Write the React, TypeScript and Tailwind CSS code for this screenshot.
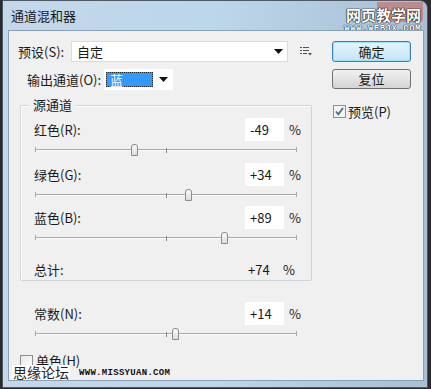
import React from "react";

const cjk = { fontFamily: '"Noto Sans CJK SC", "Noto Sans", sans-serif' };

function Slider({ value }: { value: number }) {
  const pct = (value + 200) / 400;
  return (
    <div className="relative h-[12px] w-[262px]">
      <div className="absolute left-0 right-0 top-[5px] h-[2px] border-t border-[#a9a9a9] border-b border-b-[#ffffff]" />
      <div className="absolute left-0 top-[3px] h-[5px] w-px bg-[#a9a9a9]" />
      <div className="absolute right-0 top-[3px] h-[5px] w-px bg-[#a9a9a9]" />
      <div className="absolute left-[131px] top-[4px] h-[5px] w-px bg-[#8a8a8a]" />
      <div
        className="absolute top-0 h-[12px] w-[7px] -ml-[3px] rounded-t-[3px] border border-[#8c8c8c] bg-gradient-to-b from-[#fbfbfb] to-[#dcdcdc]"
        style={{ left: `${pct * 262}px` }}
      />
    </div>
  );
}

function SourceRow({ label, value, gap, outside }: { label: string; value: string; gap: number; outside?: boolean }) {
  const num = parseInt(value, 10);
  return (
    <div style={{ marginTop: gap }}>
      <div className="flex h-[23px] items-center">
        <div className={`${outside ? "w-[227px] pl-[16px]" : "w-[224px] pl-[13px]"} text-[13px] text-[#1a1a1a]`}>{label}</div>
        <div className="flex h-[23px] w-[39px] items-center bg-white pl-[5px] text-[13px] text-[#1a1a1a]">{value}</div>
        <div className="ml-[5px] text-[13px] text-[#222]">%</div>
      </div>
      <div className={`${outside ? "ml-[17px]" : "ml-[14px]"} mt-[3px]`}>
        <Slider value={num} />
      </div>
    </div>
  );
}

function DropArrow() {
  return (
    <svg width="9" height="5" viewBox="0 0 9 5">
      <path d="M0 0h9L4.5 5z" fill="#111" />
    </svg>
  );
}

export default function App() {
  return (
    <div className="h-[389px] w-[431px] overflow-hidden bg-[#2c2a2e]" style={cjk}>
      <div className="ml-[2px] flex h-[388px] w-[426px] flex-col rounded-tr-[8px] border border-[#4d5a66] bg-gradient-to-r from-[#c4d8ea] via-[#bcd6ea] to-[#a9bfd3]">
        <div className="relative flex h-[29px] items-center pl-[8px] text-[13px] text-[#1b1b1b]">
          通道混和器
          <div className="absolute right-[4px] top-[1px] h-[20px] w-[46px] rounded-b-[4px] bg-[#c9675d] opacity-60" />
          <div className="absolute right-[6px] top-[6px] flex flex-col items-end leading-none">
            <span className="text-[15px] font-bold text-white [text-shadow:0_0_1px_#000,0_0_1px_#000,0_0_1px_#000]">网页教学网</span>
            <span className="mt-[3px] font-mono text-[9px] font-bold tracking-[0.5px] text-white [text-shadow:0_0_1px_#000,0_0_1px_#000]">
              WWW.WEBJX.COM
            </span>
          </div>
        </div>
        <div className="relative ml-[5px] h-[351px] w-[416px] border border-[#8aa0b4] bg-[#f0f0f0]">
          <div className="flex pl-[9px] pt-[10px]">
            <div className="w-[306px]">
              <div className="flex h-[21px] items-center">
                <div className="w-[53px] text-[13px] text-[#1a1a1a]">预设(S):</div>
                <div className="flex h-[21px] w-[217px] items-center justify-between border border-[#dcdcdc] bg-white pl-[5px] pr-[4px] text-[13px] text-[#1a1a1a]">
                  自定
                  <DropArrow />
                </div>
                <svg className="ml-[12px]" width="12" height="9" viewBox="0 0 12 9">
                  <path d="M0 0.5h2M0 3.5h2M0 6.5h2M3 0.5h6M3 3.5h6M3 6.5h4" stroke="#4a5560" strokeWidth="1" />
                  <path d="M8 6h4L10 8.5z" fill="#4a5560" />
                </svg>
              </div>
              <div className="mt-[7px] flex h-[21px] items-center pl-[9px]">
                <div className="w-[77px] text-[13px] text-[#1a1a1a]">输出通道(O):</div>
                <div className="flex h-[21px] w-[69px] items-center bg-white pl-[2px] pr-[5px]">
                  <div className="flex h-[15px] w-[47px] items-center border border-dotted border-[#222] bg-[#3399ff] pl-[3px] text-[13px] text-white">
                    蓝
                  </div>
                  <div className="ml-auto">
                    <DropArrow />
                  </div>
                </div>
              </div>
              <div className="relative ml-[2px] mt-[15px] h-[176px] w-[292px] rounded-[2px] border border-[#cdd5d9] shadow-[inset_1px_1px_0_#ffffff]">
                <div className="absolute -top-[9px] left-[8px] bg-[#f0f0f0] px-[4px] text-[13px] leading-[16px] text-[#1a1a1a]">
                  源通道
                </div>
                <SourceRow label="红色(R):" value="-49" gap={12} />
                <SourceRow label="绿色(G):" value="+34" gap={7} />
                <SourceRow label="蓝色(B):" value="+89" gap={5} />
                <div className="mt-[16px] flex h-[20px] items-center">
                  <div className="w-[227px] pl-[13px] text-[13px] text-[#1a1a1a]">总计:</div>
                  <div className="w-[35px] text-[13px] text-[#1a1a1a]">+74</div>
                  <div className="text-[13px] text-[#222]">%</div>
                </div>
              </div>
              <SourceRow label="常数(N):" value="+14" gap={21} outside />
              <div className="ml-[2px] mt-[14px] flex items-center">
                <div className="h-[13px] w-[13px] border border-[#8e8f8f] bg-gradient-to-br from-[#e6e6e6] to-[#ffffff]" />
                <div className="ml-[3px] text-[13px] leading-[14px] text-[#1a1a1a]">单色(H)</div>
              </div>
            </div>
            <div className="ml-[8px] flex w-[79px] flex-col">
              <div className="flex h-[21px] items-center justify-center rounded-[3px] border border-[#3c7fb1] bg-gradient-to-b from-[#e5f4fc] to-[#c4e5f6] text-[13px] text-[#1a1a1a] shadow-[inset_0_0_0_1px_#9ee0fa]">
                确定
              </div>
              <div className="mt-[7px] flex h-[20px] items-center justify-center rounded-[3px] border border-[#707070] bg-gradient-to-b from-[#f2f2f2] to-[#d4d4d4] text-[13px] text-[#1a1a1a]">
                复位
              </div>
              <div className="mt-[13px] flex items-center pl-[1px]">
                <div className="flex h-[13px] w-[13px] items-center justify-center border border-[#8e8f8f] bg-[#f4f4f4]">
                  <svg width="9" height="9" viewBox="0 0 9 9">
                    <path d="M1 4.5l2.3 2.8L8 1" stroke="#4a6a8a" strokeWidth="1.8" fill="none" />
                  </svg>
                </div>
                <div className="ml-[2px] text-[13px] text-[#1a1a1a]">预览(P)</div>
              </div>
            </div>
          </div>
          <div className="absolute bottom-0 left-[3px] flex items-end">
            <span className="bg-white px-px text-[14px] leading-[15px] text-[#222]">思缘论坛</span>
            <span className="ml-[9px] mb-[2px] font-mono text-[9px] font-bold leading-[10px] tracking-[0.3px] text-[#111]">WWW.MISSYUAN.COM</span>
          </div>
        </div>
      </div>
    </div>
  );
}
